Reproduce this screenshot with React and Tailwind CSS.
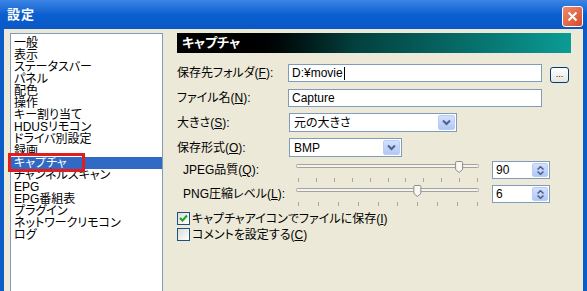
import React from "react";

const items = [
  "一般",
  "表示",
  "ステータスバー",
  "パネル",
  "配色",
  "操作",
  "キー割り当て",
  "HDUSリモコン",
  "ドライバ別設定",
  "録画",
  "キャプチャ",
  "チャンネルスキャン",
  "EPG",
  "EPG番組表",
  "プラグイン",
  "ネットワークリモコン",
  "ログ",
];

const Key = ({ k }) => (
  <>
    (<span className="underline">{k}</span>)
  </>
);

const DropArrow = () => (
  <div className="w-[17px] h-full shrink-0 rounded-[2px] border border-[#b9cdf6] bg-linear-to-b from-[#d4e0fd] to-[#b1c8f6] flex items-center justify-center">
    <svg width="9" height="7" viewBox="0 0 9 7">
      <path d="M1 1.5 L4.5 5 L8 1.5" fill="none" stroke="#4d6185" strokeWidth="2" />
    </svg>
  </div>
);

const SpinBox = ({ value }) => (
  <div className="ml-[13px] w-[58px] h-[18px] bg-white border border-[#7f9db9] flex items-center">
    <span className="flex-1 pl-[3px]">{value}</span>
    <div className="w-[16px] h-[14px] mr-[1px] rounded-[2px] border border-[#b9cdf6] bg-linear-to-b from-[#d4e0fd] to-[#b1c8f6] flex flex-col items-center justify-center gap-[1px]">
      <svg width="7" height="4" viewBox="0 0 7 4">
        <path d="M0.5 3.5 L3.5 0.7 L6.5 3.5" fill="none" stroke="#4d6185" strokeWidth="1.5" />
      </svg>
      <svg width="7" height="4" viewBox="0 0 7 4">
        <path d="M0.5 0.5 L3.5 3.3 L6.5 0.5" fill="none" stroke="#4d6185" strokeWidth="1.5" />
      </svg>
    </div>
  </div>
);

const Slider = ({ ticks, pos }) => {
  const w = 183;
  const xs = Array.from({ length: ticks }, (_, i) => 2 + (i * (w - 4)) / (ticks - 1));
  const tx = 2 + pos * (w - 4);
  return (
    <svg width={w} height="22" viewBox={`0 0 ${w} 22`} className="self-start shrink-0">
      <rect x="0.5" y="3.5" width={w - 1} height="3" rx="1" fill="#f4f3ee" stroke="#a3a29c" />
      {xs.map((x, i) => (
        <line key={i} x1={Math.round(x) + 0.5} x2={Math.round(x) + 0.5} y1="17" y2="21" stroke="#a9a79f" />
      ))}
      <path
        d={`M${tx - 3.5} 1.5 Q${tx - 3.5} 0.5 ${tx - 2.5} 0.5 H${tx + 2.5} Q${tx + 3.5} 0.5 ${tx + 3.5} 1.5 V8.5 L${tx} 11.5 L${tx - 3.5} 8.5 Z`}
        fill="#f7f7f4"
        stroke="#8d8c86"
      />
    </svg>
  );
};

const Check = ({ checked }) => (
  <div className="w-[13px] h-[13px] shrink-0 border border-[#1c5180] bg-linear-to-br from-[#dcdcd7] to-white flex items-center justify-center">
    {checked && (
      <svg width="9" height="9" viewBox="0 0 9 9">
        <path d="M1 4 L3.5 6.5 L8 1.5" fill="none" stroke="#21a121" strokeWidth="2" />
      </svg>
    )}
  </div>
);

export default function App() {
  return (
    <div className="w-[587px] h-[291px] overflow-hidden flex flex-col bg-[#0b5bc9] text-[12px] leading-[12px] text-black font-['Liberation_Sans','Noto_Sans_CJK_JP',sans-serif] [font-feature-settings:'palt']">
      <div className="h-[29px] shrink-0 flex items-center justify-between pl-[7px] pr-[4px] bg-linear-to-b from-[#3a85e4] via-[#0b5fd0] to-[#0a58c6]">
        <span className="text-white font-bold text-[13px] tracking-[1px]">設定</span>
        <div className="mt-[3px] w-[21px] h-[21px] rounded-[3px] border border-white bg-linear-to-br from-[#ef8a6c] to-[#d6482a] flex items-center justify-center">
          <svg width="11" height="11" viewBox="0 0 11 11">
            <path d="M1.5 1.5 L9.5 9.5 M9.5 1.5 L1.5 9.5" stroke="white" strokeWidth="2" />
          </svg>
        </div>
      </div>

      <div className="flex-1 flex mx-[4px] bg-[#ece9d8] min-h-0">
        <div className="relative ml-[6px] mt-[4px] w-[153px] bg-white border border-[#7f9db9] border-b-0 pt-[3px]">
          {items.map((it, i) => (
            <div
              key={it}
              className={
                i === 10
                  ? "h-[12px] pl-[3px] whitespace-nowrap bg-[#316ac5] text-white"
                  : "h-[12px] pl-[3px] whitespace-nowrap"
              }
            >
              {it}
            </div>
          ))}
          <div className="absolute left-[-3px] top-[119px] w-[77px] h-[19px] border-[3px] border-[#e41c1c]" />
        </div>

        <div className="ml-[14px] mt-[4px] w-[394px] flex flex-col">
          <div className="h-[20px] bg-linear-to-r from-black from-15% via-[#03403e] via-45% to-[#0b9c96] text-white font-bold text-[13px] pl-[5px] flex items-center">
            キャプチャ
          </div>

          <div className="mt-[11px] h-[18px] flex items-center">
            <span className="w-[111px] shrink-0">
              保存先フォルダ<Key k="F" />:
            </span>
            <div className="w-[254px] h-[18px] bg-white border border-[#7f9db9] flex items-center pl-[3px]">
              D:¥movie<span className="w-px h-[13px] bg-black ml-[1px]" />
            </div>
            <div className="ml-[8px] mt-[3px] w-[19px] h-[16px] rounded-[3px] border border-[#003c74] bg-linear-to-b from-white to-[#e6e5de] flex items-end justify-center pb-[3px] text-[9px] leading-[9px]">
              ...
            </div>
          </div>

          <div className="mt-[7px] h-[18px] flex items-center">
            <span className="w-[111px] shrink-0">
              ファイル名<Key k="N" />:
            </span>
            <div className="w-[254px] h-[18px] bg-white border border-[#7f9db9] flex items-center pl-[3px]">
              Capture
            </div>
          </div>

          <div className="mt-[6px] h-[19px] flex items-center">
            <span className="w-[112px] shrink-0">
              大きさ<Key k="S" />:
            </span>
            <div className="w-[168px] h-[19px] bg-white border border-[#7f9db9] flex items-center p-[1px]">
              <span className="flex-1 pl-[3px]">元の大きさ</span>
              <DropArrow />
            </div>
          </div>

          <div className="mt-[6px] h-[19px] flex items-center">
            <span className="w-[112px] shrink-0">
              保存形式<Key k="O" />:
            </span>
            <div className="w-[113px] h-[19px] bg-white border border-[#7f9db9] flex items-center p-[1px]">
              <span className="flex-1 pl-[3px]">BMP</span>
              <DropArrow />
            </div>
          </div>

          <div className="mt-[4px] h-[18px] flex items-center">
            <span className="w-[119px] shrink-0 pl-[6px]">
              JPEG品質<Key k="Q" />:
            </span>
            <Slider ticks={11} pos={0.9} />
            <SpinBox value="90" />
          </div>

          <div className="mt-[6px] h-[18px] flex items-center">
            <span className="w-[119px] shrink-0 pl-[6px]">
              PNG圧縮レベル<Key k="L" />:
            </span>
            <Slider ticks={10} pos={6 / 9} />
            <SpinBox value="6" />
          </div>

          <div className="mt-[9px] h-[13px] flex items-center gap-[2px]">
            <Check checked />
            <span>
              キャプチャアイコンでファイルに保存<Key k="I" />
            </span>
          </div>

          <div className="mt-[3px] h-[13px] flex items-center gap-[2px]">
            <Check />
            <span>
              コメントを設定する<Key k="C" />
            </span>
          </div>
        </div>
      </div>
    </div>
  );
}
